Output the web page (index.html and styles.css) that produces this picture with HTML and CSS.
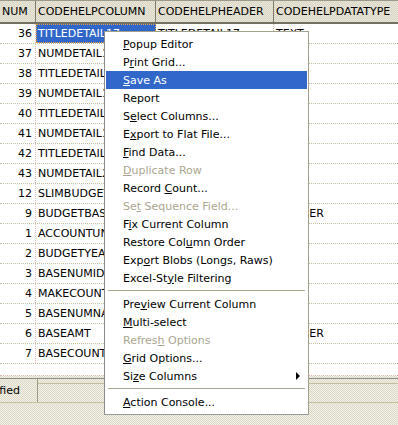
FILE: index.html
```html
<!DOCTYPE html>
<html lang="en">
<head>
    <meta charset="UTF-8">
    <title>Grid Popup</title>
    <link rel="stylesheet" href="styles.css">
</head>
<body>
    <div class="window">
        <div class="grid">
            <div class="grid-head">
                <div class="hcell c-num">NUM</div>
                <div class="hcell c-col">CODEHELPCOLUMN</div>
                <div class="hcell c-head">CODEHELPHEADER</div>
                <div class="hcell c-type">CODEHELPDATATYPE</div>
            </div>
            <div class="grid-body">
                <div class="row"><div class="cell c-num">36</div><div class="cell c-col selected">TITLEDETAIL17</div><div class="cell c-head">TITLEDETAIL17</div><div class="cell c-type">TEXT</div></div>
                <div class="row"><div class="cell c-num">37</div><div class="cell c-col">NUMDETAIL17</div><div class="cell c-head">NUMDETAIL17</div><div class="cell c-type"></div></div>
                <div class="row"><div class="cell c-num">38</div><div class="cell c-col">TITLEDETAIL18</div><div class="cell c-head">TITLEDETAIL18</div><div class="cell c-type"></div></div>
                <div class="row"><div class="cell c-num">39</div><div class="cell c-col">NUMDETAIL18</div><div class="cell c-head">NUMDETAIL18</div><div class="cell c-type"></div></div>
                <div class="row"><div class="cell c-num">40</div><div class="cell c-col">TITLEDETAIL19</div><div class="cell c-head">TITLEDETAIL19</div><div class="cell c-type"></div></div>
                <div class="row"><div class="cell c-num">41</div><div class="cell c-col">NUMDETAIL19</div><div class="cell c-head">NUMDETAIL19</div><div class="cell c-type"></div></div>
                <div class="row"><div class="cell c-num">42</div><div class="cell c-col">TITLEDETAIL20</div><div class="cell c-head">TITLEDETAIL20</div><div class="cell c-type"></div></div>
                <div class="row"><div class="cell c-num">43</div><div class="cell c-col">NUMDETAIL20</div><div class="cell c-head">NUMDETAIL20</div><div class="cell c-type"></div></div>
                <div class="row"><div class="cell c-num">12</div><div class="cell c-col">SLIMBUDGETYN</div><div class="cell c-head">SLIMBUDGETYN</div><div class="cell c-type"></div></div>
                <div class="row"><div class="cell c-num">9</div><div class="cell c-col">BUDGETBASEAMT</div><div class="cell c-head">BUDGETBASEAMT</div><div class="cell c-type">NUMBER</div></div>
                <div class="row"><div class="cell c-num">1</div><div class="cell c-col">ACCOUNTUNIT</div><div class="cell c-head">ACCOUNTUNIT</div><div class="cell c-type"></div></div>
                <div class="row"><div class="cell c-num">2</div><div class="cell c-col">BUDGETYEAR</div><div class="cell c-head">BUDGETYEAR</div><div class="cell c-type"></div></div>
                <div class="row"><div class="cell c-num">3</div><div class="cell c-col">BASENUMID</div><div class="cell c-head">BASENUMID</div><div class="cell c-type"></div></div>
                <div class="row"><div class="cell c-num">4</div><div class="cell c-col">MAKECOUNT</div><div class="cell c-head">MAKECOUNT</div><div class="cell c-type"></div></div>
                <div class="row"><div class="cell c-num">5</div><div class="cell c-col">BASENUMNAME</div><div class="cell c-head">BASENUMNAME</div><div class="cell c-type"></div></div>
                <div class="row"><div class="cell c-num">6</div><div class="cell c-col">BASEAMT</div><div class="cell c-head">BASEAMT</div><div class="cell c-type">NUMBER</div></div>
                <div class="row"><div class="cell c-num">7</div><div class="cell c-col">BASECOUNT</div><div class="cell c-head">BASECOUNT</div><div class="cell c-type"></div></div>
            </div>
        </div>

        <div class="statusbar">
            <div class="panel panel-state"><span>Modified</span></div>
            <div class="panel panel-rest"></div>
        </div>

        <!-- context menu over the grid -->
        <div class="popup-menu">
            <div class="item"><span><u>P</u>opup Editor</span></div>
            <div class="item"><span>P<u>r</u>int Grid...</span></div>
            <div class="item hover"><span><u>S</u>ave As</span></div>
            <div class="item"><span>Report</span></div>
            <div class="item"><span>S<u>e</u>lect Columns...</span></div>
            <div class="item"><span>E<u>x</u>port to Flat File...</span></div>
            <div class="item"><span><u>F</u>ind Data...</span></div>
            <div class="item disabled"><span><u>D</u>uplicate Row</span></div>
            <div class="item"><span>Record <u>C</u>ount...</span></div>
            <div class="item disabled"><span>Se<u>t</u> Sequence Field...</span></div>
            <div class="item"><span>F<u>i</u>x Current Column</span></div>
            <div class="item"><span>Restore Col<u>u</u>mn Order</span></div>
            <div class="item"><span>Exp<u>o</u>rt Blobs (Longs, Raws)</span></div>
            <div class="item"><span>Excel-St<u>y</u>le Filtering</span></div>
            <div class="separator"></div>
            <div class="item"><span>Pre<u>v</u>iew Current Column</span></div>
            <div class="item"><span><u>M</u>ulti-select</span></div>
            <div class="item disabled"><span>Refres<u>h</u> Options</span></div>
            <div class="item"><span><u>G</u>rid Options...</span></div>
            <div class="item"><span>Si<u>z</u>e Columns</span><span class="arrow"></span></div>
            <div class="separator"></div>
            <div class="item"><span><u>A</u>ction Console...</span></div>
        </div>
    </div>
</body>
</html>
```

FILE: styles.css
```css
* {
    margin: 0;
    padding: 0;
    box-sizing: border-box;
}

body {
    font-family: "DejaVu Sans", sans-serif;
    font-size: 11px;
    color: #000;
    background: repeating-conic-gradient(#f4f2e8 0 25%, #dcd8c7 0 50%) 0 0 / 2px 2px;
    overflow: hidden;
}

.window {
    position: relative;
    width: 398px;
    height: 425px;
}

/* grid */

.grid {
    height: 376px;
    background-color: #fff;
    border-bottom: 1px dotted #d9b5ad;
    overflow: hidden;
}

.grid-head {
    display: flex;
    height: 24px;
    border-top: 1px solid #9c9a8a;
    border-bottom: 2px solid #737163;
    background: repeating-conic-gradient(#ece9dc 0 25%, #d6d3c2 0 50%) 0 0 / 2px 2px;
}

.hcell {
    display: flex;
    align-items: center;
    padding-left: 2px;
    white-space: nowrap;
    overflow: hidden;
    border-right: 1px solid #7d7b6c;
    flex-shrink: 0;
}

.c-num { width: 36px; }
.c-col { width: 120px; }
.c-head { width: 118px; }
.c-type { width: 124px; }

.hcell.c-type {
    border-right: none;
}

.row {
    display: flex;
    height: 20px;
    border-bottom: 1px dotted #c4c0a4;
}

.cell {
    display: flex;
    align-items: center;
    padding-left: 2px;
    white-space: nowrap;
    overflow: hidden;
    flex-shrink: 0;
    border-right: 1px dotted #c4c0a4;
}

.cell.c-num {
    justify-content: flex-end;
    padding-right: 3px;
    border-right-color: #e2bcb4;
}

.cell.c-type {
    border-right: none;
}

.cell.selected {
    background-color: #3167c8;
    color: #fff;
    outline: 1px dotted #f0a040;
    outline-offset: -1px;
}

/* status bar */

.statusbar {
    display: flex;
    height: 25px;
    margin-top: 2px;
    border-top: 1px solid #8f8e84;
    border-bottom: 1px solid #c4c09e;
}

.panel {
    display: flex;
    align-items: center;
    white-space: nowrap;
    overflow: hidden;
}

.panel-state {
    width: 38px;
    justify-content: flex-end;
    padding-right: 17px;
    border-right: 1px solid #9e9a86;
}

.panel-rest {
    flex: 1;
    border-top: 1px solid #c4c09e;
    margin-top: 4px;
    height: 19px;
}

/* popup menu */

.popup-menu {
    position: absolute;
    left: 104px;
    top: 31px;
    width: 205px;
    padding: 3px 1px;
    background-color: #fff;
    border: 1px solid #a3a18c;
    border-left-color: #8c8c8c;
    border-bottom-color: #9a9a9a;
}

.item {
    display: flex;
    align-items: center;
    justify-content: space-between;
    height: 18px;
    padding-left: 17px;
    padding-right: 7px;
    white-space: nowrap;
}

.item.hover {
    background-color: #3167c8;
    color: #fff;
}

.item.disabled {
    color: #aaa68f;
}

.separator {
    height: 1px;
    margin: 3px 2px 4px;
    border-top: 1px solid #a9a78e;
}

.arrow {
    width: 0;
    height: 0;
    border-left: 4px solid #000;
    border-top: 4px solid transparent;
    border-bottom: 4px solid transparent;
}
```
